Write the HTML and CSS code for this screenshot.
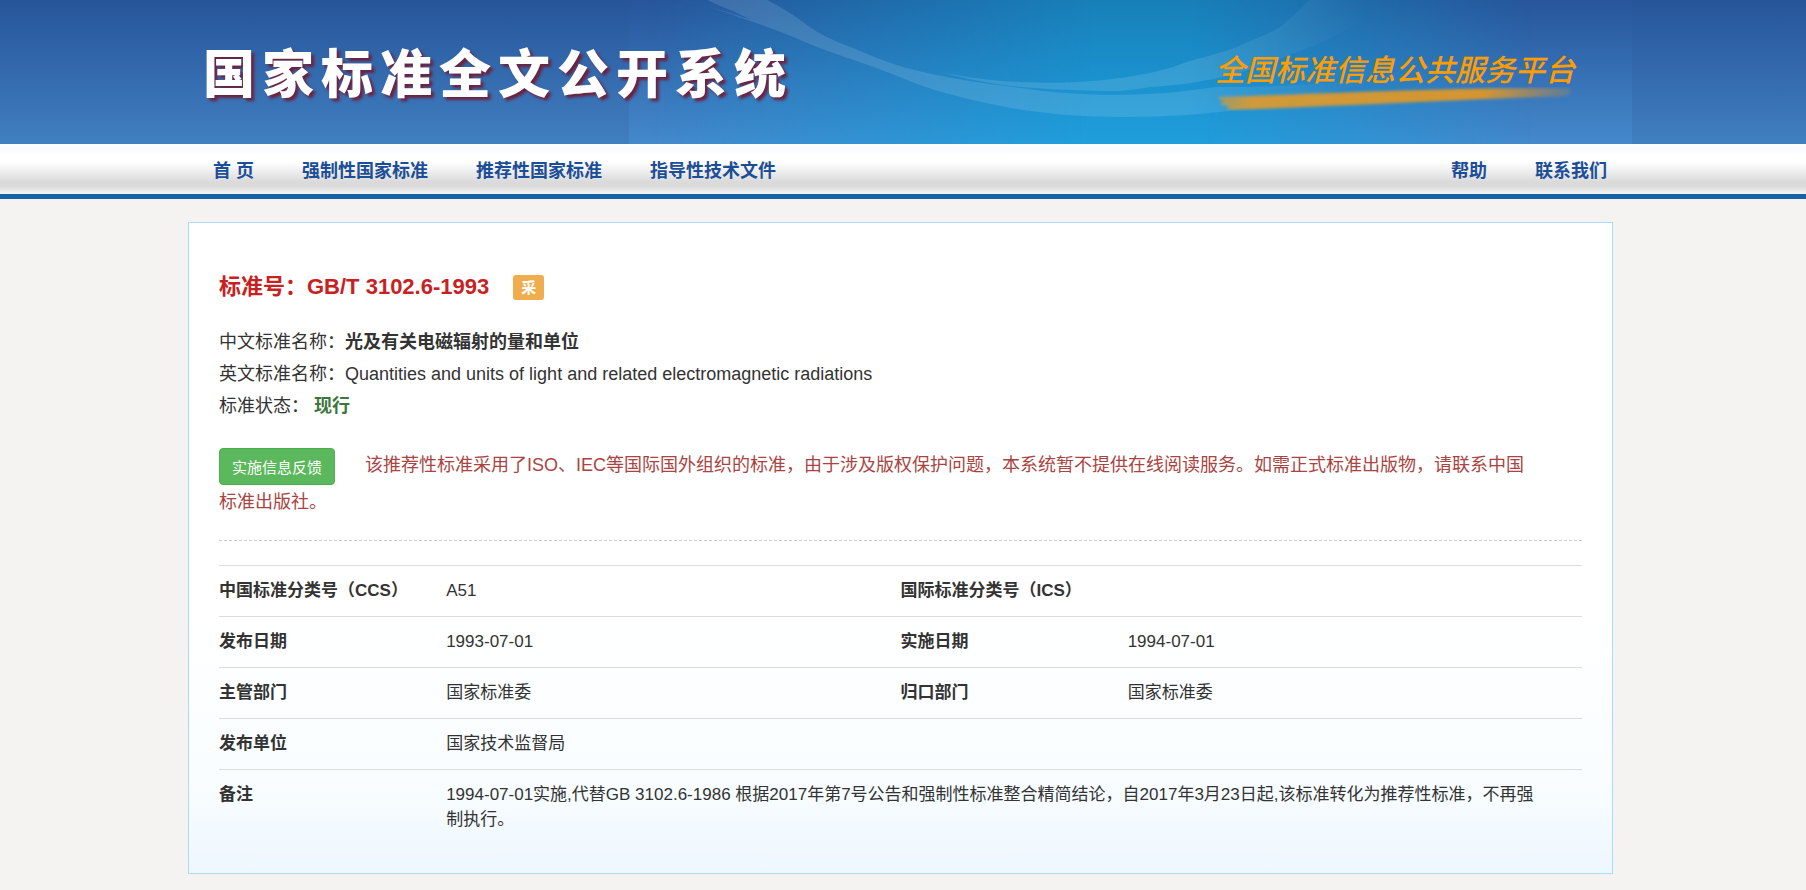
FILE: index.html
```html
<!DOCTYPE html>
<html lang="zh-CN">
<head>
  <meta charset="UTF-8">
  <meta name="viewport" content="width=device-width, initial-scale=1">
  <title>国家标准全文公开系统</title>
  <link rel="stylesheet" href="styles.css">
</head>
<body>

<header class="header">
  <div class="container header-inner">
    <svg class="banner" viewBox="0 0 1003 144" preserveAspectRatio="none" aria-hidden="true">
      <defs>
        <linearGradient id="base" x1="0" y1="0" x2="0" y2="1">
          <stop offset="0" stop-color="#27559b"/>
          <stop offset="1" stop-color="#4489cc"/>
        </linearGradient>
        <linearGradient id="glow" x1="0" y1="0" x2="0" y2="1">
          <stop offset="0" stop-color="#187fb8"/>
          <stop offset="0.5" stop-color="#1a90cc"/>
          <stop offset="1" stop-color="#1f9edc"/>
        </linearGradient>
        <linearGradient id="fade">
          <stop offset="0.02" stop-color="#fff" stop-opacity="0"/>
          <stop offset="0.46" stop-color="#fff"/>
          <stop offset="0.56" stop-color="#fff"/>
          <stop offset="0.9" stop-color="#fff" stop-opacity="0"/>
        </linearGradient>
        <linearGradient id="wave" gradientUnits="userSpaceOnUse" x1="560" y1="0" x2="740" y2="0">
          <stop offset="0" stop-color="#fff" stop-opacity="0.12"/>
          <stop offset="1" stop-color="#fff" stop-opacity="0"/>
        </linearGradient>
        <mask id="sides"><rect width="1003" height="144" fill="url(#fade)"/></mask>
      </defs>
      <rect width="1003" height="144" fill="url(#base)"/>
      <rect width="1003" height="144" fill="url(#glow)" mask="url(#sides)"/>
      <path fill="url(#wave)" d="M51 0C75 4 95 12 118 20C140 27 158 34 178 43C205 54 232 62 258 72C280 81 300 89 324 95C380 110 430 117 491 117C540 117 580 114 604 110C660 101 710 92 760 76C710 84 650 87 587 87C555 92 520 95 480 95C440 94 420 92 391 88C350 83 310 77 274 67C255 61 240 55 224 48C205 41 190 34 178 25C165 15 150 6 138 0L78 0C95 8 108 12 122 20C105 14 80 6 51 0Z"/>
      <path fill="url(#wave)" d="M311 72C340 78 365 81 391 82C430 84 460 82 491 78C520 74 540 69 558 62C580 55 598 52 612 45C630 37 640 34 651 27C666 15 672 8 680 0L752 0C740 18 732 22 722 27C700 40 685 46 665 53C640 64 620 70 601 75C575 82 550 85 522 87C510 89 500 90 491 91C455 91 420 89 391 87C360 84 335 78 311 72Z"/>
    </svg>
    <h1 class="logo">国家标准全文公开系统</h1>
    <a class="slogan" href="#">
      <span>全国标准信息公共服务平台</span>
      <svg class="brush" viewBox="0 0 360 24" aria-hidden="true">
        <defs>
          <linearGradient id="ink">
            <stop offset="0" stop-color="#dc9a2c" stop-opacity="0.6"/>
            <stop offset="0.1" stop-color="#cf9a3a"/>
            <stop offset="0.75" stop-color="#d4952f"/>
            <stop offset="1" stop-color="#d4952f" stop-opacity="0.2"/>
          </linearGradient>
          <filter id="soft"><feGaussianBlur stdDeviation="1.5"/></filter>
        </defs>
        <path fill="url(#ink)" filter="url(#soft)" d="M2 10C80 8 230 0 355 1C357 4 356 7 352 9C230 13 130 19 12 23L14 20L5 17L8 14Z"/>
      </svg>
    </a>
  </div>
</header>

<nav class="nav">
  <div class="container nav-inner">
    <a href="#">首 页</a>
    <a href="#">强制性国家标准</a>
    <a href="#">推荐性国家标准</a>
    <a href="#">指导性技术文件</a>
    <a class="nav-right" href="#">帮助</a>
    <a href="#">联系我们</a>
  </div>
</nav>

<main class="container">
  <div class="card">
    <h2 class="code">标准号：GB/T 3102.6-1993 <span class="badge">采</span></h2>

    <div class="info">
      <div>中文标准名称：<b>光及有关电磁辐射的量和单位</b></div>
      <div>英文标准名称：Quantities and units of light and related electromagnetic radiations</div>
      <div>标准状态： <b class="status">现行</b></div>
    </div>

    <div class="feedback">
      <button type="button" class="btn">实施信息反馈</button>该推荐性标准采用了ISO、IEC等国际国外组织的标准，由于涉及版权保护问题，本系统暂不提供在线阅读服务。如需正式标准出版物，请联系中国标准出版社。
    </div>

    <table class="detail">
      <tr>
        <th>中国标准分类号（CCS）</th>
        <td>A51</td>
        <th>国际标准分类号（ICS）</th>
        <td></td>
      </tr>
      <tr>
        <th>发布日期</th>
        <td>1993-07-01</td>
        <th>实施日期</th>
        <td>1994-07-01</td>
      </tr>
      <tr>
        <th>主管部门</th>
        <td>国家标准委</td>
        <th>归口部门</th>
        <td>国家标准委</td>
      </tr>
      <tr>
        <th>发布单位</th>
        <td colspan="3">国家技术监督局</td>
      </tr>
      <tr>
        <th>备注</th>
        <td colspan="3" class="note">1994-07-01实施,代替GB 3102.6-1986 根据2017年第7号公告和强制性标准整合精简结论，自2017年3月23日起,该标准转化为推荐性标准，不再强制执行。</td>
      </tr>
    </table>
  </div>
</main>

</body>
</html>
```
FILE: styles.css
```css
* {
  box-sizing: border-box;
}
body {
  margin: 0;
  background: #f4f3f1;
  color: #333;
  font-family: "Liberation Sans", "Noto Sans CJK SC", sans-serif;
  font-size: 18px;
}
a {
  color: inherit;
  text-decoration: none;
}
.container {
  max-width: 1440px;
  margin: 0 auto;
}

/* header */
.header {
  background: linear-gradient(#27559a, #407fc0);
  overflow: hidden;
}
.header-inner {
  position: relative;
  display: flex;
  justify-content: space-between;
  align-items: center;
  height: 144px;
  padding: 0 48px 0 20px;
}
.banner {
  position: absolute;
  top: 0;
  right: -9px;
  width: 1003px;
  height: 144px;
}
.logo {
  position: relative;
  margin: 0;
  padding-bottom: 4px;
  color: #fff;
  font-size: 52px;
  font-weight: 900;
  letter-spacing: 7px;
  text-shadow: 3px 3px 3px #6b2240;
}
.slogan {
  position: relative;
  display: flex;
  flex-direction: column;
  width: 360px;
  padding-top: 22px;
  color: #ff9c00;
  font-size: 30px;
  font-style: italic;
  font-weight: 500;
  line-height: 32px;
}
.brush {
  width: 360px;
  height: 24px;
}

/* nav */
.nav {
  color: #1c4e97;
  font-weight: bold;
  background: linear-gradient(#fff 0, #f8fafe 4px, #fff 12px, #fff 18px, #dadada 38px, #dadada 42px, #f4f4f4 50px);
  border-bottom: 5px solid #1761a8;
}
.nav-inner {
  display: flex;
  gap: 48px;
  padding: 4px 16px 0 30px;
  line-height: 46px;
}
.nav-right {
  margin-left: auto;
}

/* card */
.card {
  margin: 23px 10px 17px 5px;
  padding: 48px 30px 28px;
  border: 1px solid #a9dcf8;
  background: linear-gradient(#fff 60%, #f9fdff 85%, #eef7fe);
}
.code {
  display: flex;
  align-items: center;
  gap: 24px;
  margin: 0 0 23px;
  color: #c7221f;
  font-size: 22px;
  line-height: 32px;
}
.badge {
  padding: 0 8px;
  border-radius: 3px;
  background: #f0ad4e;
  color: #fff;
  font-size: 15px;
  line-height: 25px;
}
.info {
  line-height: 32px;
}
.status {
  color: #3c763d;
}
.feedback {
  margin-top: 26px;
  padding: 0 50px 21px 0;
  border-bottom: 1px dashed #ccc;
  color: #a94442;
  line-height: 34px;
}
.btn {
  height: 37px;
  margin-right: 30px;
  padding: 0 12px;
  border: 1px solid #4cae4c;
  border-radius: 4px;
  background: #5cb85c;
  color: #fff;
  font-family: inherit;
  font-size: 15px;
  vertical-align: middle;
  cursor: pointer;
}

/* detail table */
.detail {
  width: 100%;
  margin-top: 24px;
  border-collapse: collapse;
  table-layout: fixed;
  font-size: 17px;
  line-height: 25px;
}
.detail th,
.detail td {
  padding: 12px 0 13px;
  border-top: 1px solid #ddd;
  text-align: left;
  vertical-align: top;
}
.detail th {
  width: 16.6667%;
}
.detail .note {
  padding-right: 40px;
}
```
